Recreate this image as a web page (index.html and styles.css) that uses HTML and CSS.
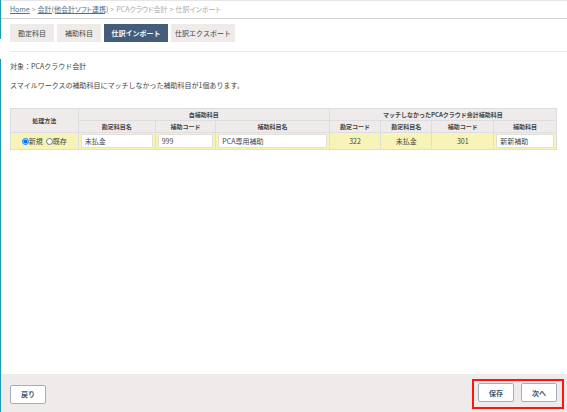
FILE: index.html
```
<!DOCTYPE html>
<html lang="ja">
<head>
    <meta charset="UTF-8">
    <meta name="viewport" content="width=device-width, initial-scale=1.0">
    <title>仕訳インポート</title>
    <link rel="stylesheet" href="styles.css">
</head>
<body>
    <nav class="breadcrumb">
        <a href="#">Home</a>
        <span>&gt;</span>
        <a href="#">会計(他会計ソフト連携)</a>
        <span>&gt;</span>
        <span>PCAクラウド会計</span>
        <span>&gt;</span>
        <span>仕訳インポート</span>
    </nav>

    <form class="page">
        <main class="content">
            <div class="tabs">
                <a href="#" class="tab">勘定科目</a>
                <a href="#" class="tab">補助科目</a>
                <a href="#" class="tab wide active">仕訳インポート</a>
                <a href="#" class="tab wide">仕訳エクスポート</a>
            </div>

            <p class="target">対象：PCAクラウド会計</p>
            <p class="message">スマイルワークスの補助科目にマッチしなかった補助科目が1個あります。</p>

            <table class="match-table">
                <colgroup>
                    <col class="col-method">
                    <col class="col-account">
                    <col class="col-code">
                    <col class="col-name">
                    <col class="col-pca-account-code">
                    <col class="col-pca-account">
                    <col class="col-pca-code">
                    <col class="col-pca-name">
                </colgroup>
                <thead>
                    <tr>
                        <th rowspan="2">処理方法</th>
                        <th colspan="3">自補助科目</th>
                        <th colspan="4">マッチしなかったPCAクラウド会計補助科目</th>
                    </tr>
                    <tr>
                        <th>勘定科目名</th>
                        <th>補助コード</th>
                        <th>補助科目名</th>
                        <th>勘定コード</th>
                        <th>勘定科目名</th>
                        <th>補助コード</th>
                        <th>補助科目</th>
                    </tr>
                </thead>
                <tbody>
                    <tr>
                        <td>
                            <div class="method">
                                <label><input type="radio" name="method" value="new" checked>新規</label>
                                <label><input type="radio" name="method" value="exist">既存</label>
                            </div>
                        </td>
                        <td><input type="text" class="field" aria-label="勘定科目名" value="未払金"></td>
                        <td><input type="text" class="field" aria-label="補助コード" value="999"></td>
                        <td><input type="text" class="field" aria-label="補助科目名" value="PCA専用補助"></td>
                        <td>322</td>
                        <td>未払金</td>
                        <td>301</td>
                        <td><input type="text" class="field" aria-label="補助科目" value="新新補助"></td>
                    </tr>
                </tbody>
            </table>
        </main>

        <footer class="footer">
            <button type="button" class="btn">戻り</button>
            <div class="actions">
                <button type="button" class="btn">保存</button>
                <button type="button" class="btn">次へ</button>
            </div>
        </footer>
    </form>
</body>
</html>
```

FILE: styles.css
```
* {
    box-sizing: border-box;
}

body {
    display: flex;
    flex-direction: column;
    min-height: 100vh;
    margin: 0;
    padding-left: 1px;
    font-family: "Noto Sans CJK JP", sans-serif;
    font-size: 7px;
    line-height: 10px;
    color: #444;
    /* side menu edge, broken where the menu has a gap */
    background: linear-gradient(#1f9ab5 0 39px, #fff 39px 59px, #1f9ab5 59px) left top / 1px 100% no-repeat #fff;
}

a {
    color: inherit;
}

.breadcrumb {
    display: flex;
    align-items: center;
    gap: 2px;
    height: 19px;
    padding: 0 9px 2px;
    border-top: 1px solid #e6e6e6;
    border-bottom: 1px solid #cfcfcf;
    font-feature-settings: "palt";
    color: #aaa;
}

.breadcrumb a {
    color: #4d7088;
}

.page {
    display: flex;
    flex: 1;
    flex-direction: column;
}

.content {
    flex: 1;
    padding: 5px 10px 10px 9px;
}

.tabs {
    display: flex;
    gap: 3px;
    margin-right: -10px;
    padding-bottom: 9px;
    border-bottom: 1px solid #eaeaea;
}

.tab {
    padding: 4px 8px;
    background-color: #efebea;
    text-align: center;
    text-decoration: none;
}

.tab.wide {
    min-width: 64px;
    padding: 4px;
}

.tab.active {
    background-color: #435d7a;
    color: #fff;
    font-weight: bold;
}

.target,
.message {
    margin: 9px 0 0;
}

.match-table {
    width: 100%;
    margin-top: 18px;
    border-collapse: collapse;
    table-layout: fixed;
    text-align: center;
}

.match-table th,
.match-table td {
    padding: 0;
    border: 1px solid #dddce0;
}

.match-table th {
    height: 12px;
    background-color: #efebea;
    font-size: 6px;
    line-height: 10px;
}

.match-table td {
    height: 17px;
    padding: 0 2px;
    background-color: #f8f4b8;
}

.col-method {
    width: 12.4%;
}

.col-account {
    width: 14.1%;
}

.col-code {
    width: 11.1%;
}

.col-name {
    width: 20.8%;
}

.col-pca-account-code {
    width: 9.4%;
}

.col-pca-account {
    width: 9.4%;
}

.col-pca-code {
    width: 11.3%;
}

.col-pca-name {
    width: 11.5%;
}

.method {
    display: flex;
    justify-content: center;
    gap: 3px;
}

.method label {
    display: flex;
    align-items: center;
}

.method input {
    width: 7px;
    height: 7px;
    margin: 0;
}

.field {
    display: block;
    width: 100%;
    height: 14px;
    padding: 0 3px;
    border: 1px solid #e2e0d4;
    background-color: #fff;
    color: #444;
    font-family: inherit;
    font-size: 7px;
}

.footer {
    display: flex;
    align-items: center;
    justify-content: space-between;
    padding: 5px 3px 3px 9px;
    background-color: #efebea;
}

.actions {
    display: flex;
    gap: 7px;
    padding: 2px 5px 5px 4px;
    border: 2px solid #ff1414;
}

.btn {
    width: 36px;
    height: 19px;
    padding: 0;
    border: 1px solid #a3afbd;
    border-radius: 2px;
    background-color: #fff;
    color: #3f5873;
    font-family: inherit;
    font-size: 7px;
    font-weight: bold;
}
```
